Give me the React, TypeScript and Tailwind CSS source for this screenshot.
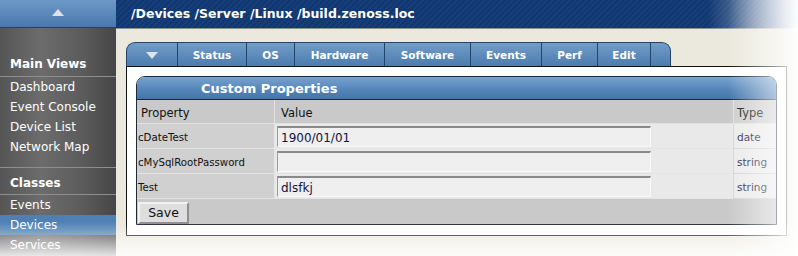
import type { ReactNode } from 'react'

const tabs: { label: ReactNode; w: string }[] = [
  { label: <span className="block h-0 w-0 border-x-[6px] border-t-[7px] border-x-transparent border-t-[#dfe3ea]" />, w: 'w-[51px] rounded-tl-[9px]' },
  { label: 'Status', w: 'w-[69px]' },
  { label: 'OS', w: 'w-[48px]' },
  { label: 'Hardware', w: 'w-[90px]' },
  { label: 'Software', w: 'w-[86px]' },
  { label: 'Events', w: 'w-[71px]' },
  { label: 'Perf', w: 'w-[56px]' },
  { label: 'Edit', w: 'w-[53px]' },
  { label: '', w: 'w-[21px] rounded-tr-[9px]' },
]

const props = [
  { name: 'cDateTest', value: '1900/01/01', type: 'date' },
  { name: 'cMySqlRootPassword', value: '', type: 'string' },
  { name: 'Test', value: 'dlsfkj', type: 'string' },
]

function NavItem({ label, active }: { label: string; active?: boolean }) {
  return (
    <li
      className={`h-[20px] pl-[10px] text-[12px] leading-[21px] text-white ${
        active ? 'bg-[#4f80b4]' : ''
      }`}
    >
      {label}
    </li>
  )
}

export default function App() {
  return (
    <div className="relative flex h-[256px] w-[798px] overflow-hidden bg-[#ebe9dd] font-['DejaVu_Sans',sans-serif]">
      <aside className="flex w-[116px] shrink-0 flex-col bg-[linear-gradient(to_right,#555,#6c6c6c_35%,#5c5c5c_70%,#464646)]">
        <div className="flex h-[28px] shrink-0 items-center justify-center border-b border-[#2c3f58] bg-[linear-gradient(#6d99c7,#4a78ad)]">
          <span className="mb-[2px] block h-0 w-0 border-x-[6px] border-b-[7px] border-x-transparent border-b-[#dde2ea]" />
        </div>
        <div className="mt-[27px] border-b border-[#8e8e8e] pt-[1px] pb-[4px] pl-[10px] text-[12px] leading-[16px] font-bold text-white">
          Main Views
        </div>
        <ul className="pb-[10px]">
          <NavItem label="Dashboard" />
          <NavItem label="Event Console" />
          <NavItem label="Device List" />
          <NavItem label="Network Map" />
        </ul>
        <div className="border-y border-[#8e8e8e] pt-[7px] pb-[3px] pl-[10px] text-[12px] leading-[16px] font-bold text-white">
          Classes
        </div>
        <ul>
          <NavItem label="Events" />
          <NavItem label="Devices" active />
          <NavItem label="Services" />
        </ul>
      </aside>

      <main className="flex min-w-0 flex-1 flex-col">
        <header className="flex h-[29px] shrink-0 items-center border-b border-[#8f8f8f] bg-[repeating-linear-gradient(135deg,#163f79_0px,#163f79_2px,#113770_2px,#113770_4px)] pl-[15px] text-[12.5px] font-bold text-white">
          /Devices /Server /Linux /build.zenoss.loc
        </header>

        <div className="px-[10px] pt-[13px]">
          <div className="flex h-[24px]">
            {tabs.map((t, i) => (
              <div
                key={i}
                className={`${t.w} flex items-center justify-center border-t border-l border-[#24446b] bg-[linear-gradient(#729dc9,#4c7bae)] pt-[2px] text-[10.5px] font-bold text-white last:border-r`}
              >
                {t.label}
              </div>
            ))}
          </div>

          <div className="w-[661px] border border-[#111] bg-white px-[9px] pt-[9px] pb-[10px]">
            <div className="border border-[#1d2a3a] rounded-t-[9px] overflow-hidden">
              <div className="h-[23px] border-b border-[#1d2a3a] bg-[linear-gradient(#79a3cf,#5586ba_55%,#4474a9)] pl-[64px] text-[13px] leading-[24px] font-bold text-white">
                Custom Properties
              </div>
              <div className="grid grid-cols-[137px_459px_1fr] text-[#111]">
                <div className="h-[24px] border-b border-[#e2e2e2] bg-[#c9c9c9] pl-[4px] text-[11.5px] leading-[27px]">
                  Property
                </div>
                <div className="h-[24px] border-b border-l border-[#e2e2e2] bg-[#c9c9c9] pl-[6px] text-[11.5px] leading-[27px]">
                  Value
                </div>
                <div className="h-[24px] border-b border-l border-[#e2e2e2] bg-[#cecece] pl-[3px] text-[11.5px] leading-[27px]">
                  Type
                </div>
                {props.map((p) => (
                  <div key={p.name} className="contents">
                    <div className="h-[25px] border-b border-[#e4e4e4] bg-[#d0d0d0] pl-[1px] text-[10.2px] leading-[28px]">
                      {p.name}
                    </div>
                    <div className="h-[25px] border-b border-l border-[#e4e4e4] bg-[#e9e9e9] pt-[2px] pl-[2px]">
                      <div className="h-[21px] w-[374px] border-t-2 border-l border-r border-b border-t-[#8a8a8a] border-l-[#9a9a9a] border-r-[#f8f8f8] border-b-[#f8f8f8] bg-[#efefef] pl-[3px] text-[12px] leading-[20px] text-[#14143c]">
                        {p.value}
                      </div>
                    </div>
                    <div className="h-[25px] border-b border-l border-[#d4d4d4] bg-[#ebebeb] pl-[3px] text-[10.5px] leading-[26px] text-[#1a1a44]">
                      {p.type}
                    </div>
                  </div>
                ))}
                <div className="col-span-3 h-[25px] bg-[#c9c9c9] pt-[1px] pl-[1px]">
                  <button
                    type="button"
                    className="h-[22px] w-[51px] border-2 border-t-[#f2f2f2] border-l-[#f2f2f2] border-r-[#8e8e8e] border-b-[#8e8e8e] bg-[#dedede] text-[12.5px] leading-[18px] text-[#111]"
                  >
                    Save
                  </button>
                </div>
              </div>
            </div>
          </div>
        </div>
      </main>

      <div className="pointer-events-none absolute top-0 right-0 h-full w-[70px] bg-[linear-gradient(to_right,rgba(255,255,255,0),rgba(255,255,255,0.55)_65%,rgba(255,255,255,0.95))]" />
      <div className="pointer-events-none absolute top-0 right-0 h-[29px] w-[90px] bg-[linear-gradient(to_right,rgba(255,255,255,0),rgba(255,255,255,0.75))]" />
      <div className="pointer-events-none absolute bottom-0 left-0 h-[34px] w-full bg-[linear-gradient(to_bottom,rgba(255,255,255,0),rgba(255,255,255,0.85))]" />
    </div>
  )
}
